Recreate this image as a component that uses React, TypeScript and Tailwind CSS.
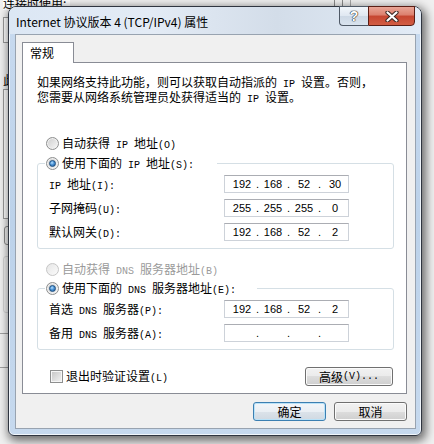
import { Fragment, type ReactNode } from "react";

const cjk = "font-['Noto_Sans_CJK_SC','Noto_Sans',sans-serif]";

// SimSun-like text: CJK at 12px, ASCII as half-width mono
function T({ s }: { s: string }) {
  const parts = s.match(/[\x20-\x7e]+|[^\x20-\x7e]+/g) ?? [];
  return (
    <>
      {parts.map((p, i) =>
        /^[\x20-\x7e]/.test(p) ? (
          <span key={i} className="whitespace-pre font-['Liberation_Mono',monospace] text-[10px]">
            {p}
          </span>
        ) : (
          <span key={i}>{p}</span>
        )
      )}
    </>
  );
}

function Radio({ on, disabled }: { on?: boolean; disabled?: boolean }) {
  return (
    <span
      className={
        disabled
          ? "flex h-[13px] w-[13px] shrink-0 items-center justify-center rounded-full border border-[#c6c6c6] bg-[linear-gradient(135deg,#e6e6e6,#fbfbfb)]"
          : "flex h-[13px] w-[13px] shrink-0 items-center justify-center rounded-full border border-[#8e8f8f] bg-[linear-gradient(135deg,#cdcdcd,#f8f8f8)] shadow-[inset_0_0_0_1px_#f2f2f2]"
      }
    >
      {on && (
        <span className="h-[7px] w-[7px] rounded-full border border-[#1d4f80] bg-[radial-gradient(circle_at_40%_35%,#b8e2ff_0%,#4a92d6_45%,#1e5a96_100%)]" />
      )}
    </span>
  );
}

function IpBox({ v }: { v: string[] }) {
  return (
    <div className="flex h-[18px] w-[125px] items-center border border-[#cdd2d9] border-t-[#abadb3] bg-white pl-[5px] font-['Liberation_Sans',sans-serif] text-[11px] leading-none text-black">
      {v.map((o, i) => (
        <Fragment key={i}>
          {i > 0 && <span className="w-[7px] text-center">.</span>}
          <span className="w-[24px] text-center">{o}</span>
        </Fragment>
      ))}
    </div>
  );
}

function Row({ label, v }: { label: string; v: string[] }) {
  return (
    <div className="flex h-[18px] items-center">
      <span className="w-[175px]">
        <T s={label} />
      </span>
      <IpBox v={v} />
    </div>
  );
}

function WinButton({ children, def, w }: { children: ReactNode; def?: boolean; w: string }) {
  return (
    <button
      className={
        (def
          ? "border-[#3c7fb1] bg-[linear-gradient(180deg,#f3f6f9_0%,#eaeff4_50%,#dce3ea_50%,#d0d9e2_100%)] shadow-[inset_0_0_0_1px_#b9e2f8] "
          : "border-[#707070] bg-[linear-gradient(180deg,#f2f2f2_0%,#ebebeb_50%,#dddddd_50%,#cfcfcf_100%)] shadow-[inset_0_0_0_1px_#fbfbfb] ") +
        w +
        " flex h-[19px] items-center justify-center rounded-[3px] border text-[12px] leading-none text-black"
      }
    >
      {children}
    </button>
  );
}

export default function App() {
  return (
    <div className={"relative h-[444px] w-[434px] overflow-hidden bg-[#f0f0f0] text-black " + cjk}>
      {/* window behind the dialog */}
      <div className="flex w-full">
        <div className="flex w-[70px] flex-col pl-[3px] text-[12px]">
          <div className="-mt-[4px] h-[14px] leading-[14px] bg-white">连接时使用:</div>
          <div className="mt-[7px] h-[26px] w-[60px] border border-[#9a9a9a] bg-white" />
          <div className="mt-[30px] h-[14px] leading-[14px]">此</div>
          <div className="mt-[2px] h-[130px] w-[60px] border border-[#9a9a9a] bg-white" />
          <div className="mt-[7px] ml-px h-[19px] w-[20px] rounded-[3px] border border-[#8a8a8a]" />
          <div className="mt-[11px] h-[57px] w-[60px] rounded-[3px] border border-[#d5d5d5]" />
          <div className="mt-[20px] -ml-[3px] h-[35px] w-[60px] border-y border-[#a0a0a0]" />
        </div>
        <div className="ml-[264px] flex h-[8px] gap-[7px]">
          <div className="w-px bg-[#8a8a8a]" />
          <div className="w-px bg-[#8a8a8a]" />
          <div className="w-px bg-[#a8a8a8]" />
        </div>
      </div>

      {/* dialog */}
      <div className="absolute left-[8px] top-[6px] flex h-[430px] w-[414px] flex-col rounded-t-[8px] rounded-b-[6px] border border-[#2f3540] bg-[linear-gradient(180deg,#c8daef_0%,#bcd2ea_50%,#c6d9ee_100%)] shadow-[2px_3px_10px_2px_rgba(0,0,0,0.55),inset_0_0_0_1px_rgba(255,255,255,0.75)]">
        <div className="flex h-[27px] items-start rounded-t-[7px] bg-[linear-gradient(90deg,#dce7f4_0%,#e3ebf5_35%,#d3dde9_65%,#e2ebf6_100%)]">
          <span className="ml-[7px] mt-[7px] text-[12px] leading-[16px] text-black">
            Internet 协议版本 4 (TCP/IPv4) 属性
          </span>
          <div className="-mt-px ml-auto mr-[6px] flex">
            <div className="flex h-[20px] w-[29px] items-center justify-center rounded-bl-[4px] border border-r-0 border-[#4f5966] bg-[linear-gradient(180deg,#f2f6fb_0%,#dfe7f1_50%,#cdd8e5_51%,#d9e3ee_100%)] font-['Liberation_Sans',sans-serif] text-[14px] font-bold text-white [text-shadow:0_0_1px_#222,0_0_1px_#222,0_0_1px_#222]">
              ?
            </div>
            <div className="flex h-[20px] w-[47px] items-center justify-center rounded-br-[4px] border border-[#5a1d14] bg-[linear-gradient(180deg,#e9a596_0%,#dc7f6d_45%,#c64530_50%,#d25d43_100%)]">
              <svg width="14" height="11" viewBox="0 0 14 11">
                <path d="M2.5 1.5 L11.5 9.5 M11.5 1.5 L2.5 9.5" stroke="#3a2622" strokeWidth="4.2" strokeLinecap="round" />
                <path d="M2.5 1.5 L11.5 9.5 M11.5 1.5 L2.5 9.5" stroke="#ffffff" strokeWidth="2.2" strokeLinecap="round" />
              </svg>
            </div>
          </div>
        </div>

        {/* client area */}
        <div className="ml-[6px] flex h-[395px] w-[401px] flex-col border border-[#98a3b0] bg-[#f0f0f0] pl-[6px] pr-[8px] pt-[7px]">
          <div className="relative z-10 -mb-px flex h-[21px] w-[52px] items-start border border-b-0 border-[#898c95] bg-white pl-[7px] pt-[3px] text-[12px] leading-[14px]">
            常规
          </div>
          <div className="flex h-[332px] flex-col border border-[#898c95] bg-white text-[12px]">
            <div className="pl-[14px] pt-[13px] leading-[12px]">
              <div>
                <T s="如果网络支持此功能，则可以获取自动指派的 IP 设置。否则，" />
              </div>
              <div>
                <T s="您需要从网络系统管理员处获得适当的 IP 设置。" />
              </div>
            </div>

            <div className="mt-[29px] flex h-[16px] items-center gap-[3px] pl-[23px]">
              <Radio />
              <span>
                <T s="自动获得 IP 地址(O)" />
              </span>
            </div>
            <fieldset className="ml-[14px] mt-[4px] w-[357px] rounded-[3px] border border-[#d5dfe5] px-0 pb-[7px] pt-[4px]">
              <legend className="ml-[7px] flex h-[16px] w-[172px] items-center gap-[3px] px-px">
                <Radio on />
                <span>
                  <T s="使用下面的 IP 地址(S):" />
                </span>
              </legend>
              <div className="flex flex-col gap-[6px] pl-[11px]">
                <Row label="IP 地址(I):" v={["192", "168", "52", "30"]} />
                <Row label="子网掩码(U):" v={["255", "255", "255", "0"]} />
                <Row label="默认网关(D):" v={["192", "168", "52", "2"]} />
              </div>
            </fieldset>

            <div className="mt-[12px] flex h-[16px] items-center gap-[3px] pl-[23px] text-[#9a9a9a]">
              <Radio disabled />
              <span>
                <T s="自动获得 DNS 服务器地址(B)" />
              </span>
            </div>
            <fieldset className="ml-[14px] mt-[3px] w-[357px] rounded-[3px] border border-[#d5dfe5] px-0 pb-[7px] pt-[4px]">
              <legend className="ml-[7px] flex h-[16px] w-[212px] items-center gap-[3px] px-px">
                <Radio on />
                <span>
                  <T s="使用下面的 DNS 服务器地址(E):" />
                </span>
              </legend>
              <div className="flex flex-col gap-[6px] pl-[11px]">
                <Row label="首选 DNS 服务器(P):" v={["192", "168", "52", "2"]} />
                <Row label="备用 DNS 服务器(A):" v={["", "", "", ""]} />
              </div>
            </fieldset>

            <div className="mt-[17px] flex h-[19px] items-center justify-between pl-[27px] pr-[13px]">
              <div className="flex items-center gap-[3px]">
                <span className="h-[13px] w-[13px] border border-[#8e8f8f] bg-[linear-gradient(135deg,#c4c4c4,#f4f4f4)] shadow-[inset_0_0_0_1px_#f6f6f6]" />
                <span>
                  <T s="退出时验证设置(L)" />
                </span>
              </div>
              <WinButton w="w-[88px]">
                <T s="高级(V)..." />
              </WinButton>
            </div>
          </div>

          <div className="mt-[8px] flex justify-end gap-[8px]">
            <WinButton def w="w-[73px]">
              确定
            </WinButton>
            <WinButton w="w-[73px]">取消</WinButton>
          </div>
        </div>
      </div>
    </div>
  );
}
